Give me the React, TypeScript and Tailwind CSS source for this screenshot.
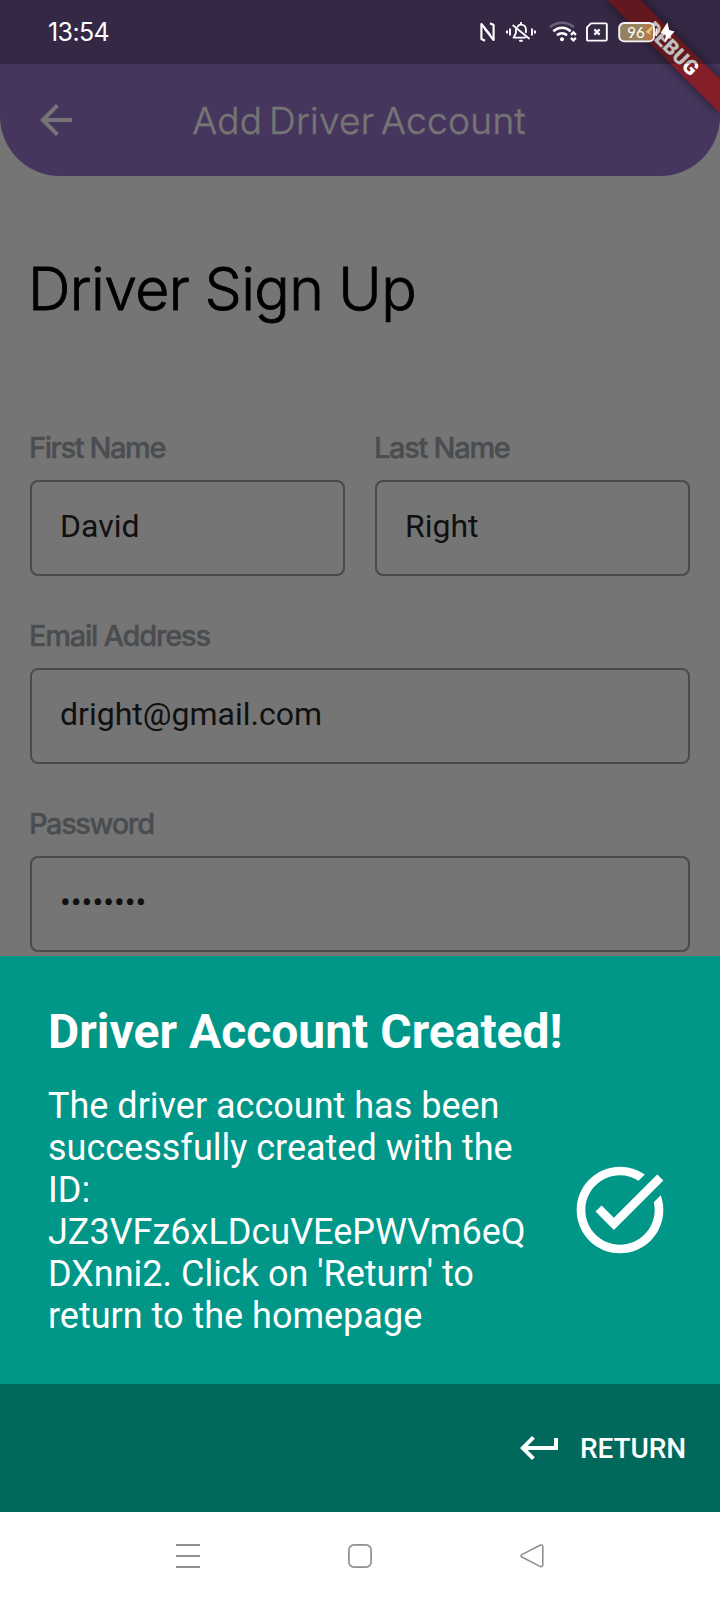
import type { ReactNode } from "react";
import { MdArrowBack, MdKeyboardReturn, MdTaskAlt } from "react-icons/md";

function NfcIcon() {
  return (
    <svg className="h-[20px] w-[16px]" viewBox="0 0 16 20" fill="none" stroke="#fff" strokeWidth="2.1" strokeLinejoin="round">
      <path d="M5 18.8L1.4 17V2L10.6 13.4" />
      <path d="M10 1.2L13.6 3V18L4.6 6.6" />
    </svg>
  );
}

function MutedBellIcon() {
  return (
    <svg className="h-[20px] w-[32px]" viewBox="0 0 32 20" fill="none" stroke="#fff" strokeWidth="1.9" strokeLinecap="round" strokeLinejoin="round">
      <path d="M2 8.4v3.2M5 6.6v6.8M30 8.4v3.2M27 6.6v6.8" strokeLinecap="butt" />
      <path d="M12.6 4.6C13.4 3.2 14.6 2.6 16 2.6c2.8 0 4.9 2.1 4.9 5v2.6" />
      <path d="M10.9 7.7v3.4L8.6 15.6H20" />
      <path d="M8.2 3.6L24 16.4" />
      <path d="M16 .9v1M15 18.8h2" />
    </svg>
  );
}

function WifiIcon() {
  return (
    <svg className="h-[22px] w-[28px]" viewBox="0 0 28 22" fill="none" strokeLinecap="butt">
      <path d="M1 6.2C8 .2 18 .2 25 6.2" stroke="#6a607a" strokeWidth="2.6" />
      <path d="M4.3 10.2C9.4 5.6 16.6 5.6 21.7 10.2" stroke="#fff" strokeWidth="2.6" />
      <path d="M8 14.2C11 11.6 15 11.6 18 14.2" stroke="#fff" strokeWidth="2.6" />
      <circle cx="13" cy="18.2" r="2" fill="#fff" />
      <path d="M21.9 13.9L24.4 11.4L26.9 13.9M21.9 16.9L24.4 19.4L26.9 16.9" stroke="#fff" strokeWidth="2.2" />
    </svg>
  );
}

function NoSimIcon() {
  return (
    <svg className="h-[20px] w-[22px]" viewBox="0 0 22 20" fill="none" stroke="#fff">
      <path d="M5 1.4H19.6Q20.8 1.4 20.8 2.6V17.4Q20.8 18.6 19.6 18.6H2.2Q1 18.6 1 17.4V5.4Z" strokeWidth="1.9" strokeLinejoin="round" />
      <path d="M8.4 7.4L13.6 12.6M13.6 7.4L8.4 12.6" strokeWidth="2.2" />
    </svg>
  );
}

function BatteryIcon() {
  return (
    <svg className="h-[22px] w-[58px]" viewBox="0 0 58 22">
      <defs>
        <linearGradient id="charge" x1="0" x2="1" y1="0" y2="0">
          <stop offset="0" stopColor="#91815f" />
          <stop offset=".65" stopColor="#9c835a" />
          <stop offset=".82" stopColor="#b47a48" />
          <stop offset="1" stopColor="#b3743f" />
        </linearGradient>
      </defs>
      <rect x="2.2" y="2" width="34.8" height="18.4" rx="5" fill="url(#charge)" stroke="#f4f2f4" strokeWidth="1.9" />
      <path d="M28.6 11L35.6 4.5V8L32.6 11L34.6 14Z" fill="#dfc88a" />
      <path d="M39.4 8v6.4" stroke="#efecee" strokeWidth="1.6" strokeLinecap="round" />
      <path d="M50.4 1.2L43.8 11.8L48.8 13.4L47.8 21.4L57.6 10.4L52.2 8.9Z" fill="#fff" />
      <text x="19" y="16.6" textAnchor="middle" className="fill-white font-['Lato',sans-serif] text-[15px]">96</text>
    </svg>
  );
}

function DebugBanner() {
  return (
    <svg className="absolute top-0 right-0 h-[150px] w-[150px]" viewBox="0 0 150 150">
      <defs>
        <filter id="bannerShadow" x="-50%" y="-100%" width="200%" height="300%">
          <feGaussianBlur stdDeviation="6" />
        </filter>
      </defs>
      <g transform="translate(150 0) rotate(45)">
        <rect x="-80" y="56" width="160" height="24" fill="#000" opacity=".5" filter="url(#bannerShadow)" />
        <rect x="-90" y="56" width="180" height="24" fill="#841f29" />
        <text x="0.5" y="75.2" textAnchor="middle" className="fill-white font-['Roboto',sans-serif] text-[20.6px] font-black">DEBUG</text>
      </g>
    </svg>
  );
}

function Field({ label, tracking, children }: { label: string; tracking: string; children: ReactNode }) {
  return (
    <div className="flex flex-1 flex-col">
      <label className={`-ml-px h-[48px] text-[29px] leading-[32px] font-medium text-[#4a4d50] [-webkit-text-stroke:0.4px_#4a4d50] font-['Inter',sans-serif] ${tracking}`}>{label}</label>
      <div className="flex h-[96px] items-center rounded-[8px] border-2 border-[#4a4a4a] px-[28px] pb-[4px] text-[32px] text-[#101010]">
        {children}
      </div>
    </div>
  );
}

export default function App() {
  return (
    <div className="relative flex h-[1600px] w-[720px] flex-col overflow-hidden bg-[#757575] font-['Roboto',sans-serif]">
      <header className="flex h-[176px] shrink-0 flex-col rounded-b-[60px] bg-[#46365d] pt-[64px]">
        <div className="grid h-[112px] grid-cols-[112px_1fr_112px] items-center text-[#757575]">
          <MdArrowBack className="ml-[32px] size-[48px]" />
          <h1 className="pt-[2px] pr-[2px] text-center text-[37px] font-light tracking-[0.3px] [word-spacing:-4px] whitespace-nowrap [-webkit-text-stroke:0.5px_#757575] font-['Inter',sans-serif]">Add Driver Account</h1>
        </div>
      </header>

      <main className="flex h-[780px] shrink-0 flex-col overflow-hidden px-[30px] pt-[76px]">
        <h2 className="-ml-[2px] h-[180px] text-[59px] leading-[73px] font-light tracking-[-0.6px] text-black [word-spacing:-1px] [-webkit-text-stroke:0.8px_#000] font-['Inter',sans-serif]">Driver Sign Up</h2>
        <div className="flex shrink-0 flex-col gap-[44px]">
          <div className="flex gap-[30px]">
            <Field label="First Name" tracking="tracking-[-1.4px]">David</Field>
            <Field label="Last Name" tracking="tracking-[-1.3px]">Right</Field>
          </div>
          <Field label="Email Address" tracking="tracking-[-1.26px]">dright@gmail.com</Field>
          <Field label="Password" tracking="tracking-[-1.4px]">••••••••</Field>
        </div>
      </main>

      <section className="flex h-[428px] shrink-0 flex-col bg-[#009688] px-[48px] pt-[48px] text-white">
        <h3 className="text-[48px] leading-[56px] font-bold">Driver Account Created!</h3>
        <div className="mt-[24px] flex items-center gap-[40px]">
          <p className="w-[480px] shrink-0 pt-px text-[36px] leading-[42.1px] break-words">
            The driver account has been successfully created with the ID: JZ3VFz6xLDcuVEePWVm6eQDXnni2. Click on 'Return' to return to the homepage
          </p>
          <MdTaskAlt className="mb-[2px] size-[104px] shrink-0" />
        </div>
      </section>

      <div className="flex h-[128px] shrink-0 items-center justify-end gap-[16px] bg-[#00695b] pr-[34px] text-white">
        <MdKeyboardReturn className="size-[48px]" />
        <span className="pt-[2px] text-[28px] font-medium tracking-[-0.1px]">RETURN</span>
      </div>

      <nav className="flex h-[88px] shrink-0 items-center justify-center gap-[148px] bg-white">
        <svg className="size-[24px]" viewBox="0 0 24 24" stroke="#8f8f8f" strokeWidth="2">
          <path d="M0 1H24M0 12H24M0 23H24" />
        </svg>
        <svg className="size-[24px]" viewBox="0 0 24 24" fill="none" stroke="#8f8f8f" strokeWidth="1.7">
          <rect x=".9" y=".9" width="22.2" height="22.2" rx="5" />
        </svg>
        <svg className="size-[24px]" viewBox="0 0 24 24" fill="none" stroke="#8f8f8f" strokeWidth="1.6" strokeLinejoin="round">
          <path d="M1.8 10.6L20 1.2Q22.8 .2 22.8 3V20.4Q22.8 23.4 20 22.4L1.8 13Q.2 11.8 1.8 10.6Z" />
        </svg>
      </nav>

      <DebugBanner />
      <div className="absolute inset-x-0 top-0 flex h-[64px] items-center justify-between bg-black/25 pr-[45px] pl-[48px]">
        <span className="pt-px text-[25px] tracking-[-0.6px] text-white font-['Inter',sans-serif]">13:54</span>
        <div className="flex items-center">
          <NfcIcon />
          <div className="ml-[9px] flex"><MutedBellIcon /></div>
          <div className="ml-[12px] flex"><WifiIcon /></div>
          <div className="ml-[9px] flex"><NoSimIcon /></div>
          <div className="ml-[9px] flex"><BatteryIcon /></div>
        </div>
      </div>
    </div>
  );
}
